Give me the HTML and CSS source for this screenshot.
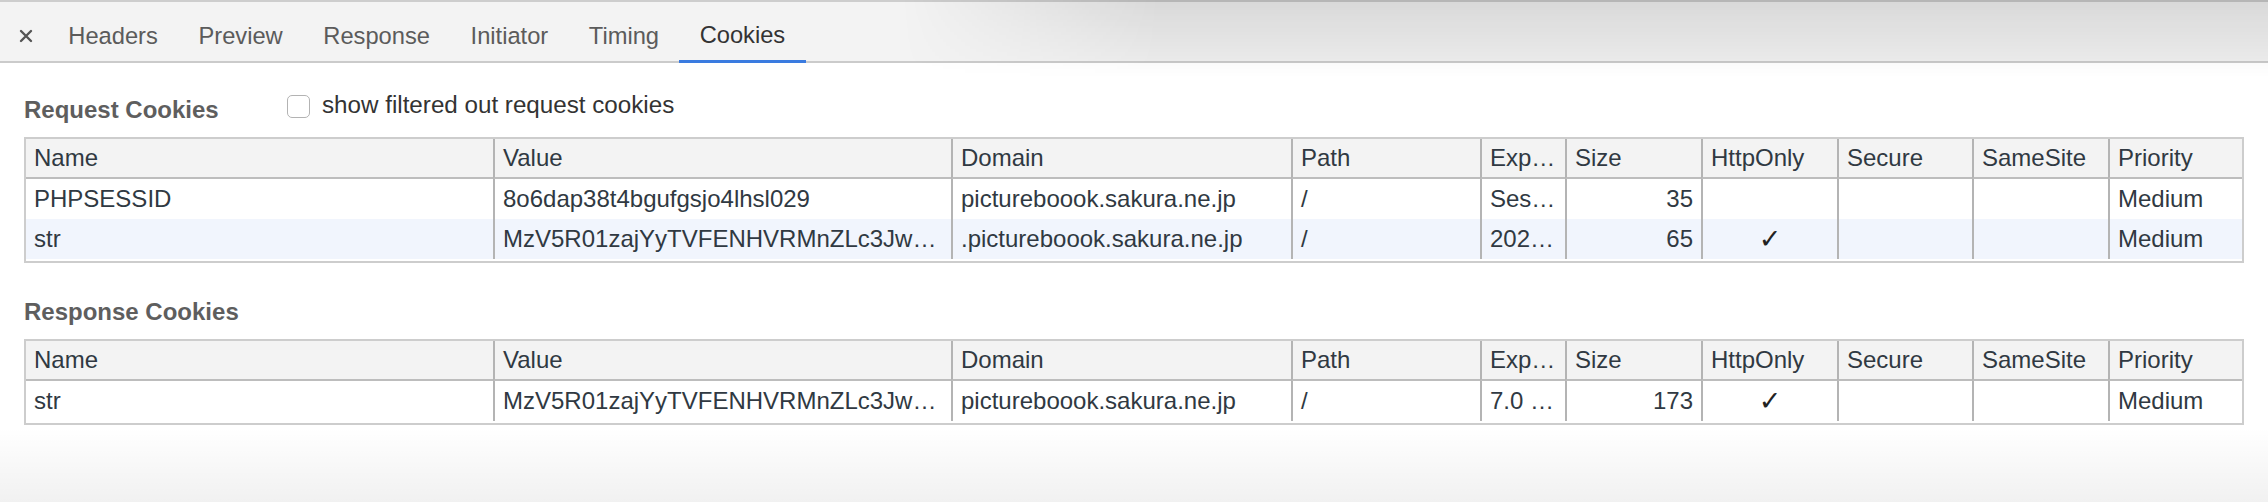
FILE: index.html
```html
<!DOCTYPE html>
<html lang="en">
<head>
<meta charset="utf-8">
<title>Cookies</title>
<link rel="stylesheet" href="styles.css">
</head>
<body>
<div class="panel">
  <div class="tabbar">
    <div class="close">
      <svg width="14" height="14" viewBox="0 0 14 14"><path d="M2 2 L12 12 M12 2 L2 12" stroke="#555" stroke-width="2.4" stroke-linecap="round"/></svg>
    </div>
    <div class="tab">Headers</div>
    <div class="tab">Preview</div>
    <div class="tab">Response</div>
    <div class="tab">Initiator</div>
    <div class="tab">Timing</div>
    <div class="tab active">Cookies</div>
  </div>

  <div class="content">
    <section class="cookie-section">
      <div class="section-head">
        <h3 class="section-title">Request Cookies</h3>
        <label class="filter"><span class="checkbox"></span><span>show filtered out request cookies</span></label>
      </div>
      <table class="grid">
        <colgroup>
          <col class="c-name"><col class="c-value"><col class="c-domain"><col class="c-path"><col class="c-exp">
          <col class="c-size"><col class="c-http"><col class="c-secure"><col class="c-same"><col class="c-prio">
        </colgroup>
        <thead>
          <tr><th>Name</th><th>Value</th><th>Domain</th><th>Path</th><th>Exp…</th><th>Size</th><th>HttpOnly</th><th>Secure</th><th>SameSite</th><th>Priority</th></tr>
        </thead>
        <tbody>
          <tr><td>PHPSESSID</td><td>8o6dap38t4bgufgsjo4lhsl029</td><td>pictureboook.sakura.ne.jp</td><td>/</td><td>Ses…</td><td class="num">35</td><td class="mid"></td><td></td><td></td><td>Medium</td></tr>
          <tr class="alt"><td>str</td><td>MzV5R01zajYyTVFENHVRMnZLc3Jw…</td><td>.pictureboook.sakura.ne.jp</td><td>/</td><td>202…</td><td class="num">65</td><td class="mid">✓</td><td></td><td></td><td>Medium</td></tr>
        </tbody>
      </table>
    </section>

    <section class="cookie-section second">
      <div class="section-head">
        <h3 class="section-title">Response Cookies</h3>
      </div>
      <table class="grid">
        <colgroup>
          <col class="c-name"><col class="c-value"><col class="c-domain"><col class="c-path"><col class="c-exp">
          <col class="c-size"><col class="c-http"><col class="c-secure"><col class="c-same"><col class="c-prio">
        </colgroup>
        <thead>
          <tr><th>Name</th><th>Value</th><th>Domain</th><th>Path</th><th>Exp…</th><th>Size</th><th>HttpOnly</th><th>Secure</th><th>SameSite</th><th>Priority</th></tr>
        </thead>
        <tbody>
          <tr><td>str</td><td>MzV5R01zajYyTVFENHVRMnZLc3Jw…</td><td>pictureboook.sakura.ne.jp</td><td>/</td><td>7.0 …</td><td class="num">173</td><td class="mid">✓</td><td></td><td></td><td>Medium</td></tr>
        </tbody>
      </table>
    </section>
  </div>

  <div class="window-shadow"></div>
  <div class="bottom-fade"></div>
</div>
</body>
</html>
```

FILE: styles.css
```css
* { box-sizing: border-box; }

html, body {
  margin: 0;
  padding: 0;
  background: #ffffff;
}

body {
  font-family: "Liberation Sans", Arial, Helvetica, sans-serif;
  color: #303030;
  width: 2268px;
  height: 502px;
  overflow: hidden;
}

.panel {
  position: relative;
  width: 2268px;
  height: 502px;
}

/* ---------- tab bar ---------- */
.tabbar {
  display: flex;
  align-items: stretch;
  height: 63px;
  background: #f3f3f3;
  border-top: 2px solid #cdcdcd;
  border-bottom: 2px solid #cbcbcb;
}

.close {
  width: 48px;
  display: flex;
  align-items: center;
  justify-content: flex-start;
  padding: 8px 0 0 19px;
}

.tab {
  display: flex;
  align-items: center;
  padding: 9px 20.3px 0;
  font-size: 23.7px;
  color: #5b5b5b;
  white-space: nowrap;
  margin-bottom: -2px;
  border-bottom: 2px solid transparent;
}

.tab.active {
  color: #333333;
  border-bottom: 3px solid #3a7be0;
}

/* ---------- content ---------- */
.content {
  padding: 0 24px;
}

.section-head {
  display: flex;
  align-items: flex-start;
  padding-top: 28px;
  margin-bottom: 13px;
}

.section-title {
  margin: 5px 0 0;
  width: 263px;
  font-size: 24px;
  line-height: 28px;
  font-weight: bold;
  color: #5e5e5e;
  white-space: nowrap;
}

.filter {
  display: flex;
  align-items: center;
  gap: 12px;
  height: 28px;
  font-size: 24.2px;
  line-height: 28px;
  color: #333333;
  white-space: nowrap;
}

.checkbox {
  display: inline-block;
  width: 23px;
  height: 23px;
  margin-top: 3px;
  border: 1.5px solid #b3b3b3;
  border-radius: 5px;
  background: #ffffff;
}

.second .section-head {
  padding-top: 35px;
}

.second .section-title {
  margin-top: 0;
}

/* ---------- data grid ---------- */
.grid {
  width: 2220px;
  table-layout: fixed;
  border-collapse: separate;
  border-spacing: 0;
  border: 2px solid #cdcdcd;
  padding-bottom: 2px;
  font-size: 24px;
  color: #303942;
}

.c-name   { width: 467px; }
.c-value  { width: 458px; }
.c-domain { width: 340px; }
.c-path   { width: 189px; }
.c-exp    { width: 85px; }
.c-size   { width: 136px; }
.c-http   { width: 136px; }
.c-secure { width: 135px; }
.c-same   { width: 136px; }
.c-prio   { width: 134px; }

.grid th,
.grid td {
  height: 40px;
  padding: 0 8px;
  text-align: left;
  font-weight: normal;
  white-space: nowrap;
  overflow: hidden;
  text-overflow: ellipsis;
  border-left: 2px solid #b4b4b4;
  line-height: 28px;
}

.grid th:first-child,
.grid td:first-child {
  border-left: none;
}

.grid thead th {
  background: #f3f3f3;
  border-bottom: 2px solid #bdbdbd;
}

.grid tbody tr.alt td {
  background: #f1f5fd;
}

.grid td.num {
  text-align: right;
}

.grid td.mid {
  text-align: center;
  font-family: "DejaVu Sans", sans-serif;
  font-size: 27px;
  color: #222;
}

/* ---------- overlays (window shadows) ---------- */
.window-shadow {
  position: absolute;
  top: 0;
  left: 900px;
  right: 0;
  height: 78px;
  background: linear-gradient(to bottom, rgba(0,0,0,0.11) 0px, rgba(0,0,0,0.07) 30px, rgba(0,0,0,0.035) 61px, rgba(0,0,0,0.015) 64px, rgba(0,0,0,0) 78px);
  -webkit-mask-image: linear-gradient(to right, transparent 0px, #000 260px);
  mask-image: linear-gradient(to right, transparent 0px, #000 260px);
  pointer-events: none;
}

.bottom-fade {
  position: absolute;
  left: 0;
  right: 0;
  bottom: 0;
  height: 75px;
  background: linear-gradient(to bottom, rgba(0,0,0,0) 0%, rgba(0,0,0,0.055) 100%);
  pointer-events: none;
}
```
